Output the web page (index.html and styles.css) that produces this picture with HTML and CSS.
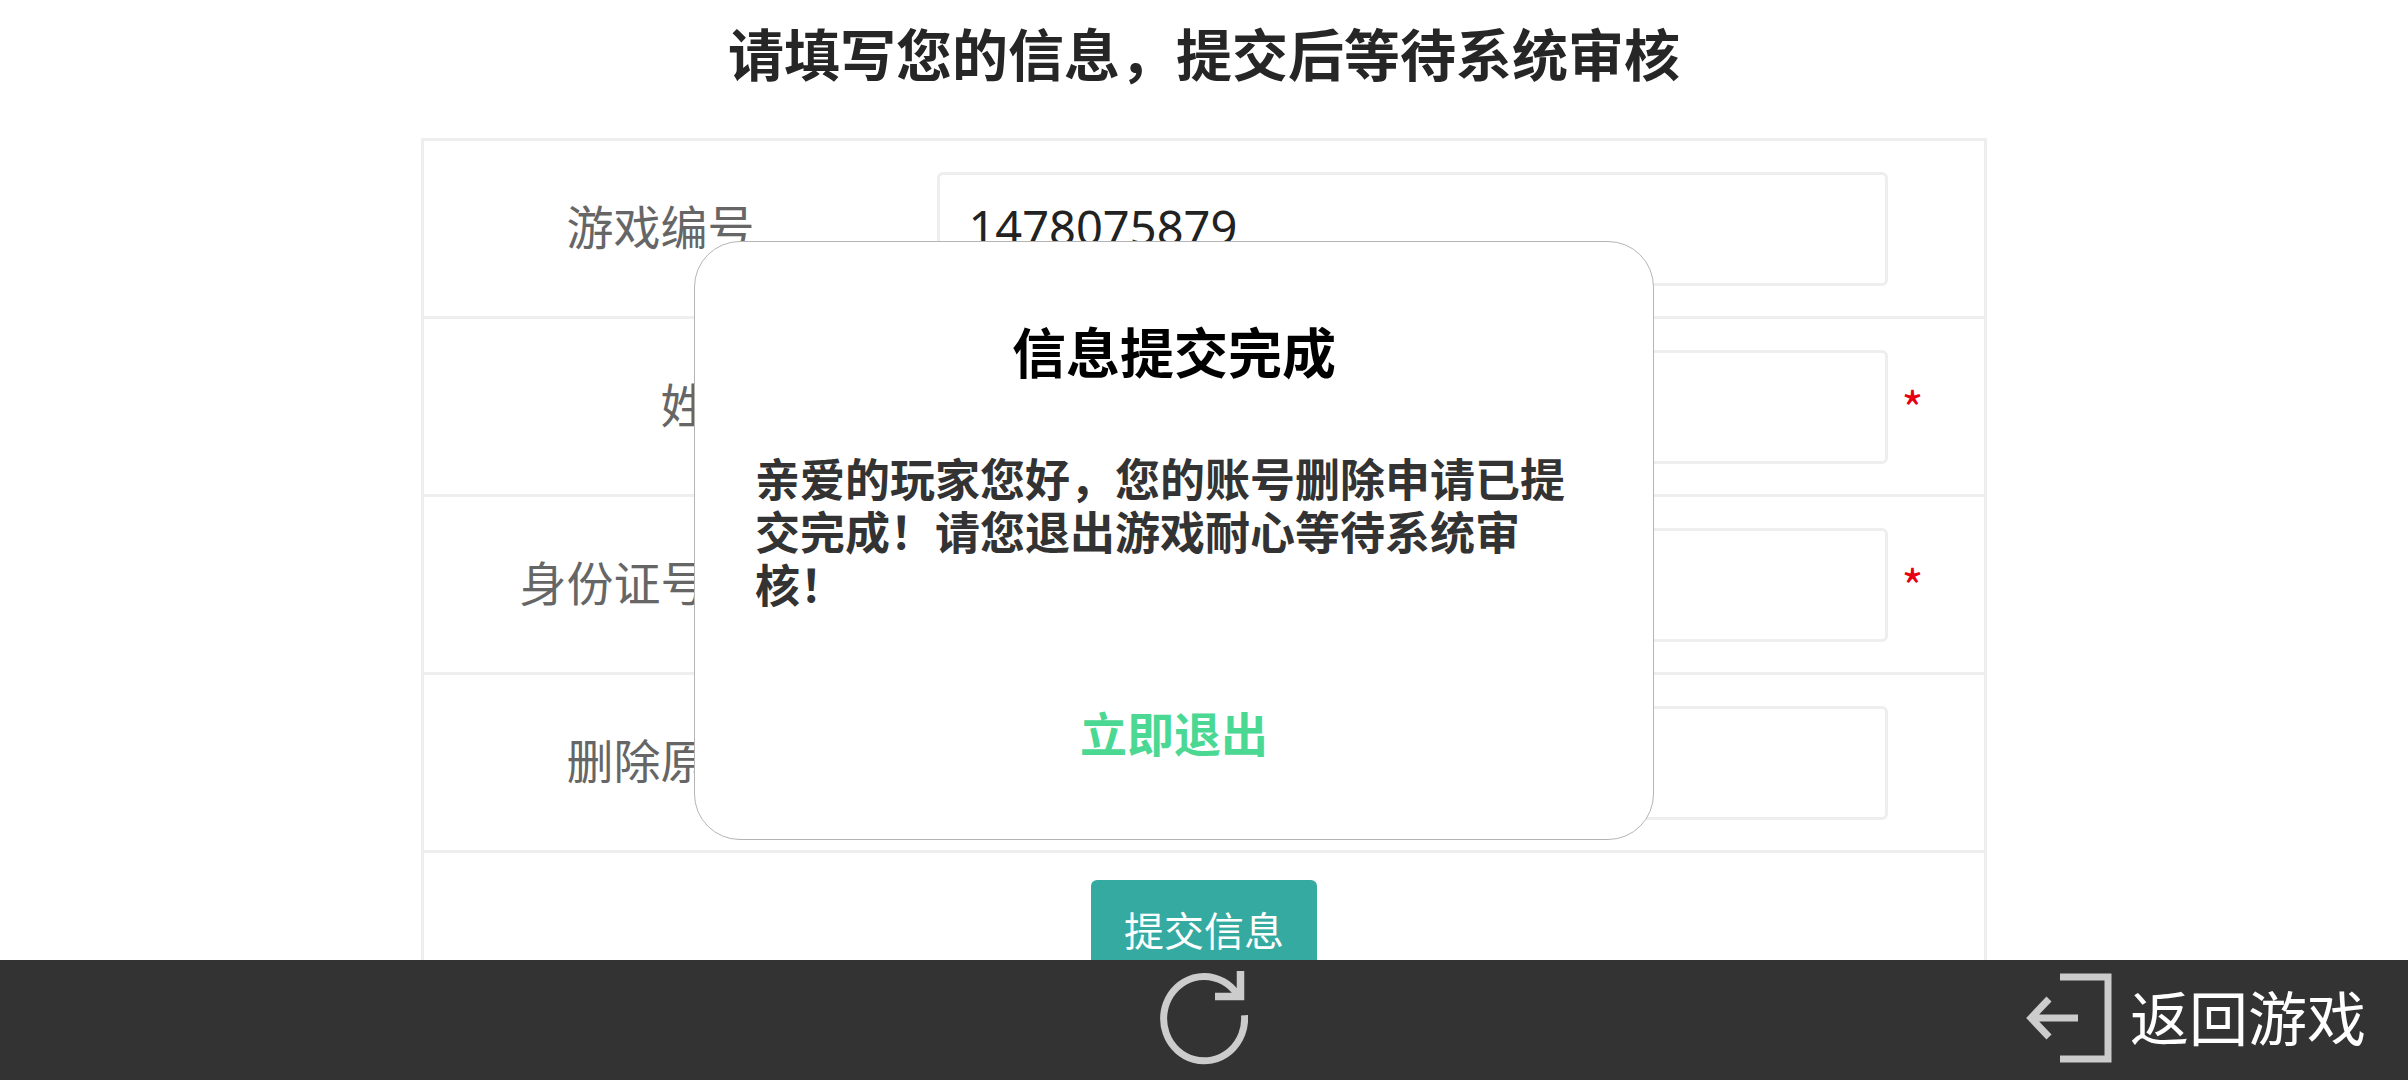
FILE: index.html
```html
<!DOCTYPE html>
<html lang="zh-CN">
<head>
<meta charset="utf-8">
<meta name="viewport" content="width=device-width, initial-scale=1">
<title>账号删除申请</title>
<link rel="stylesheet" href="styles.css">
</head>
<body>
<main class="page">
  <h1 class="page-title">请填写您的信息，提交后等待系统审核</h1>
  <form class="form">
    <div class="row">
      <label class="row-label" for="game-id">游戏编号</label>
      <input class="row-input" id="game-id" type="text" value="1478075879">
    </div>
    <div class="row">
      <label class="row-label" for="real-name">姓名</label>
      <input class="row-input" id="real-name" type="text">
      <span class="required">*</span>
    </div>
    <div class="row">
      <label class="row-label" for="id-number">身份证号码</label>
      <input class="row-input" id="id-number" type="text">
      <span class="required">*</span>
    </div>
    <div class="row">
      <label class="row-label" for="reason">删除原因</label>
      <input class="row-input" id="reason" type="text">
    </div>
    <div class="actions">
      <button class="submit" type="button">提交信息</button>
    </div>
  </form>
</main>

<footer class="toolbar">
  <button class="tool refresh" type="button" aria-label="刷新">
    <svg width="88" height="94" viewBox="0 0 88 94" fill="none" stroke="#ccc" stroke-width="7" aria-hidden="true">
      <path d="M84.500 44.300A40.500 42.200 0 1 1 77 23"/>
      <path d="M55 25.500H80.500V0" stroke-width="7.500"/>
    </svg>
  </button>
  <button class="tool back" type="button">
    <svg width="86" height="90" viewBox="0 0 86 90" fill="none" stroke="#ccc" stroke-width="7" aria-hidden="true">
      <path d="M34 4H82V86H34"/>
      <path d="M52 45H6M23 26L5 45L23 64"/>
    </svg>
    <span class="back-text">返回游戏</span>
  </button>
</footer>

<div class="overlay">
  <section class="dialog" role="dialog" aria-modal="true" aria-labelledby="dialog-title">
    <h2 class="dialog-title" id="dialog-title">信息提交完成</h2>
    <p class="dialog-text">亲爱的玩家您好，您的账号删除申请已提交完成！请您退出游戏耐心等待系统审核！</p>
    <button class="dialog-action" type="button">立即退出</button>
  </section>
</div>
</body>
</html>
```
FILE: styles.css
```css
* {
  box-sizing: border-box;
}

body {
  margin: 0;
  height: 100vh;
  display: flex;
  flex-direction: column;
  overflow: hidden;
  background: #fff;
  color: #222;
  font-family: "Noto Sans CJK SC", sans-serif;
}

button,
input {
  font-family: inherit;
}

button {
  padding: 0;
  border: 0;
  background: none;
  cursor: pointer;
}

.page {
  flex: 1;
  min-height: 0;
  overflow: hidden;
  padding-top: 12px;
}

.page-title {
  margin: 0 0 46px;
  font-size: 56px;
  line-height: 80px;
  text-align: center;
  color: #262626;
}

.form {
  width: 65%;
  margin: 0 auto;
  border: 3px solid #eee;
}

.row {
  display: grid;
  grid-template-columns: 330fr 183fr 950fr 96fr;
  align-items: center;
  height: 178px;
  border-bottom: 3px solid #eee;
}

.row-label {
  padding-bottom: 8px;
  font-size: 47px;
  line-height: 64px;
  text-align: right;
  white-space: nowrap;
  color: #666;
}

.row-input {
  grid-column: 3;
  width: 100%;
  height: 114px;
  padding: 0 28px 4px;
  border: 3px solid #eee;
  border-radius: 6px;
  background: #fff;
  color: #222;
  font-family: "Noto Sans", sans-serif;
  font-size: 47px;
}

.required {
  padding-left: 14px;
  font-size: 47px;
  line-height: 64px;
  color: #e60012;
}

.actions {
  display: flex;
  justify-content: center;
  padding: 27px 0;
}

.submit {
  height: 106px;
  padding: 0 33px 8px;
  border-radius: 6px;
  background: #35aaa0;
  color: #fff;
  font-size: 40px;
  line-height: 48px;
}

.toolbar {
  flex: none;
  display: grid;
  grid-template-columns: 1fr auto 1fr;
  align-items: center;
  height: 120px;
  padding: 0 42px 4px;
  background: #333;
}

.tool {
  display: flex;
  align-items: center;
  color: #fff;
}

.refresh {
  grid-column: 2;
}

.back {
  grid-column: 3;
  justify-self: end;
  gap: 18px;
  font-size: 59px;
  line-height: 80px;
}

.back-text {
  padding-bottom: 4px;
}

.overlay {
  position: fixed;
  inset: 0;
  display: flex;
  align-items: center;
  justify-content: center;
  padding-right: 60px;
}

.dialog {
  display: flex;
  flex-direction: column;
  align-items: center;
  width: 960px;
  max-width: 100%;
  padding: 69px 60px 75px;
  border: 1px solid #b4b4b4;
  border-radius: 46px;
  background: #fff;
}

.dialog-title {
  margin: 0 0 60px;
  font-size: 54px;
  line-height: 80px;
  color: #000;
}

.dialog-text {
  margin: 0 0 90px;
  font-size: 45px;
  font-weight: 700;
  line-height: 53px;
  color: #333;
}

.dialog-action {
  font-size: 47px;
  font-weight: 700;
  line-height: 64px;
  color: #4bd893;
}
```
